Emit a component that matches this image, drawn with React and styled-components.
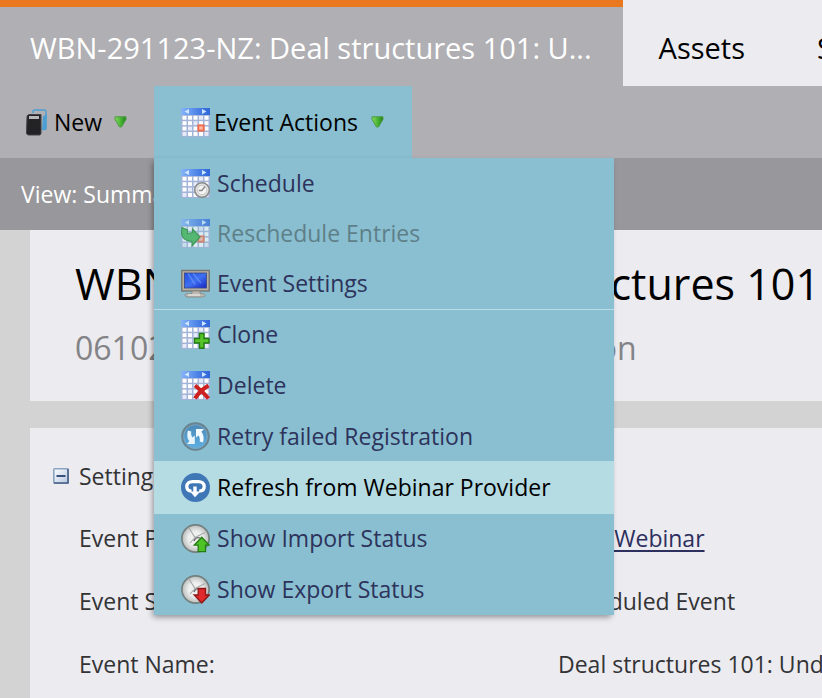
import React from 'react'
import styled, { createGlobalStyle } from 'styled-components'

const GlobalStyle = createGlobalStyle`
    * {
        box-sizing: border-box;
    }
    body {
        margin: 0;
        background: #d3d3d3;
        font-family: "Open Sans", "Noto Sans", sans-serif;
        font-size: 23px;
        line-height: 32px;
        color: #333336;
    }
    button {
        font: inherit;
        border: none;
        cursor: pointer;
    }
`

const Page = styled.div`
    min-height: 100vh;
    display: flex;
    flex-direction: column;
    overflow: hidden;
`
const TabBar = styled.nav`
    display: flex;
    background: #ebebf0;
`
const Tab = styled.a`
    flex: none;
    height: 86px;
    padding: ${props => props.$active ? "0 31px 0 30px" : "0 36px"};
    border-top: 7px solid ${props => props.$active ? "#e9781e" : "#ebebf0"};
    background: ${props => props.$active ? "#b0afb3" : "#ebebf0"};
    color: ${props => props.$active ? "#fff" : "#000"};
    font-size: 29px;
    line-height: 82px;
    white-space: nowrap;
    text-decoration: none;
`
const Toolbar = styled.div`
    display: flex;
    height: 72px;
    background: #b0afb3;
`
const ToolButton = styled.button`
    display: flex;
    align-items: center;
    height: 72px;
    padding: ${props => props.$open ? "0 28px 0 27px" : "0 27px 0 26px"};
    background: ${props => props.$open ? "#89bfd1" : "transparent"};
    color: #000;
    white-space: nowrap;
    svg:last-child {
        margin-left: ${props => props.$open ? "13px" : "12px"};
    }
`
const ToolLabel = styled.span`
    margin-left: ${props => props.$gap || "4px"};
`
const MenuAnchor = styled.div`
    position: relative;
`
const Menu = styled.div`
    position: absolute;
    z-index: 2;
    top: 100%;
    left: 0;
    width: 460px;
    background: #89bfd1;
    box-shadow: -2px 3px 6px -1px rgba(0, 0, 0, 0.4);
`
const MenuGroup = styled.ul`
    display: flex;
    flex-direction: column;
    gap: ${props => props.$gap || "0"};
    margin: 0;
    padding: ${props => props.$pad || "0"};
    list-style: none;
    & + & {
        border-top: 1px solid #b9dde6;
    }
`
const MenuItem = styled.button`
    display: flex;
    align-items: center;
    gap: 7px;
    width: 100%;
    height: 50px;
    padding: 0 27px 2px;
    background: ${props => props.$hover ? "#b5dbe3" : "transparent"};
    box-shadow: ${props => props.$hover ? "0 -2px 0 #b5dbe3, 0 1px 0 #b5dbe3" : "none"};
    color: ${props => props.$hover ? "#000" : "#2d335b"};
    text-align: left;
    white-space: nowrap;
    &:disabled {
        color: #5f7f88;
        cursor: default;
    }
    &:disabled svg {
        opacity: 0.7;
    }
`
const ViewBar = styled.div`
    height: 72px;
    padding-left: 21px;
    background: #98979b;
    color: #fff;
    line-height: 73px;
`
const Content = styled.main`
    flex: 1;
    display: flex;
    flex-direction: column;
    gap: 27px;
    padding-left: 30px;
`
const Panel = styled.section`
    flex: ${props => props.$grow ? "1" : "none"};
    background: #ebebf0;
    white-space: nowrap;
`
const TitlePanel = styled(Panel)`
    height: 171px;
    padding: 24px 0 0 45px;
`
const Title = styled.h1`
    margin: 0;
    color: #000;
    font-size: 43px;
    font-weight: 400;
    line-height: 60px;
`
const SubTitle = styled.p`
    margin: 10px 0 0;
    color: #838386;
    font-size: 32px;
    line-height: 48px;
`
const SettingsHead = styled.div`
    display: flex;
    align-items: center;
    gap: 10px;
    padding: 32px 0 0 23px;
`
const Toggle = styled.button`
    display: flex;
    padding: 0;
    background: transparent;
`
const SettingsTitle = styled.h2`
    margin: 0;
    font-size: 23px;
    font-weight: 400;
`
const Fields = styled.dl`
    display: grid;
    grid-template-columns: 479px 1fr;
    row-gap: 31px;
    margin: 30px 0 0;
    padding-left: 49px;
    dd {
        margin: 0;
    }
`
const Link = styled.a`
    color: #2d2f5e;
    text-decoration-thickness: 2px;
    text-underline-offset: 3px;
`

const cells = [0, 1, 2, 3, 4]

const Svg = ({ children }) => (
    <svg width="29" height="29" viewBox="0 0 29 29" aria-hidden="true">{children}</svg>
)

const Calendar = ({ children }) => (
    <Svg>
        <rect width="29" height="29" fill="#a3b4d8" />
        <rect width="29" height="7" fill="url(#calHead)" />
        <path d="M8 1v5L3.5 3.500zM21 1v5l4.500-2.500z" fill="#cfe6ff" />
        {[0, 1, 2, 3].map(row => cells.map(col => (
            <rect key={row + '-' + col} x={1.5 + col * 5.5} y={7.8 + row * 5.4} width="4" height="3.900" fill={(row + col) % 4 === 3 ? "#e6eaf9" : "#fff"} />
        )))}
        {children}
    </Svg>
)

const EventIcon = () => (
    <Calendar>
        <rect x="17.300" y="17.300" width="5.400" height="5.400" fill="#ffb59e" stroke="#ee6a48" strokeWidth="1.800" />
    </Calendar>
)
const ScheduleIcon = () => (
    <Calendar>
        <circle cx="21" cy="21" r="7.300" fill="#e6e6e4" stroke="#8b8c8d" strokeWidth="1.600" />
        <circle cx="21" cy="21" r="4.800" fill="#f4f4f2" stroke="#c3c4c4" />
        <path d="M24 17.500l-3.200 4h-3" fill="none" stroke="#85878a" strokeWidth="1.300" />
    </Calendar>
)
const RescheduleIcon = () => (
    <Calendar>
        <rect x="17.300" y="17.300" width="5.400" height="5.400" fill="#ffb59e" stroke="#ee6a48" strokeWidth="1.800" />
        <path d="M1 8.500l5.500 2.500v3.500l5-1V10l7.500 8-8 9v-4.500C5 22 .5 19 .5 14z" fill="#3fb64a" stroke="#23852c" strokeWidth="1.200" />
    </Calendar>
)
const CloneIcon = () => (
    <Calendar>
        <path d="M18.500 13.500h4.500v5h5v4.500h-5v5.200h-4.500V23h-5v-4.500h5z" fill="#57c529" stroke="#217a12" strokeWidth="1.400" />
    </Calendar>
)
const DeleteIcon = () => (
    <Calendar>
        <path d="M14 14.500c4 3 9.500 8 13.500 13M27.500 14.500c-5 3-10.500 8-13.500 13" fill="none" stroke="#cf2020" strokeWidth="4" />
    </Calendar>
)
const MonitorIcon = () => (
    <Svg>
        <rect x=".8" y="1.500" width="27.400" height="20.500" fill="#b5b1a7" stroke="#77756f" strokeWidth="1.400" />
        <rect x="3.500" y="4" width="22" height="15" fill="url(#screen)" stroke="#3a4680" strokeWidth=".8" />
        <path d="M7 4.500l7 11M12 4.500l8 9.500" stroke="#7fa6ff" strokeWidth="1.500" opacity=".5" />
        <path d="M11 22h8v2.500c4 0 5 1 5 2.300s-3 1.200-5 1.200H8c-3 0-4-.5-4-1.800S7 24.500 11 24.500z" fill="#bcbab2" stroke="#85837c" strokeWidth=".8" />
        <path d="M7 26h12" stroke="#ecebe6" strokeWidth="1.200" />
    </Svg>
)
const RetryIcon = () => (
    <Svg>
        <circle cx="14.500" cy="14.500" r="13.300" fill="url(#retry)" stroke="#69838f" strokeWidth="2" />
        <circle cx="14.500" cy="14.500" r="11.800" fill="none" stroke="#7fa5bb" />
        <path d="M7 8.500l3.300 1c-.5 2.500 0 4.500 1.300 6l2.200-2V22H6l2.400-2.800C6 16.500 5.800 12 7 8.500z" fill="#e8f6fc" />
        <path d="M22 20.500l-3.300-1c.5-2.500 0-4.500-1.300-6l-2.400 2V7h8l-2.600 2.800c2.400 2.700 2.800 7.200 1.600 10.700z" fill="#f4fbff" />
    </Svg>
)
const RefreshIcon = () => (
    <Svg>
        <circle cx="14.500" cy="14.500" r="14.500" fill="#3f77b6" />
        <path d="M10.500 18.200C7 18 5.800 16 5.800 13.600c0-3.300 2.700-5 5.700-5h6c3 0 5.700 1.700 5.700 5 0 2.900-2 4.600-5 4.600" fill="none" stroke="#fff" strokeWidth="3.300" />
        <path d="M12.300 13.500h3.400v5h3.600L14 24.200l-5-5.700h3.300z" fill="#fff" />
    </Svg>
)
const Dial = ({ children }) => (
    <Svg>
        <circle cx="14.500" cy="14.500" r="13.600" fill="url(#dial)" stroke="#74807f" strokeWidth="1.700" />
        <path d="M8 4l6 9.500L24 8.500M14 13.500L9 19" fill="none" stroke="#a5a8a8" strokeWidth="1.100" />
        <path d="M13 17c1-3 4-4 6-3" fill="none" stroke="#666" strokeWidth="1.300" />
        {children}
    </Svg>
)
const ImportIcon = () => (
    <Dial>
        <path d="M20.700 13.200l7.600 8h-3.800v6.500h-7.300v-6.500h-4z" fill="#4fc226" stroke="#247d14" strokeWidth="1.300" />
    </Dial>
)
const ExportIcon = () => (
    <Dial>
        <path d="M20.700 28l7.600-8h-3.800v-6.500h-7.300V20h-4z" fill="#e0292c" stroke="#8e1716" strokeWidth="1.300" />
    </Dial>
)
const NewIcon = () => (
    <svg width="21" height="27" viewBox="0 0 21 27" aria-hidden="true">
        <path d="M7 4V2.500C7 1.500 7.800 1 8.500 1h10c1 0 1.500.6 1.500 1.500V19c0 1-.7 1.500-1.700 1.500h-2" fill="none" stroke="#4b9fd4" strokeWidth="1.400" />
        <path d="M17 7.500L20.500 5v15.500H16z" fill="#4b9fd4" />
        <path d="M1 8c0-1.800 1.200-2.500 3-2.500h11V24c0 1.500-.8 2-2 2H3c-1.500 0-2.500-.7-2.500-2z" fill="#232326" stroke="#434347" />
        <path d="M3 8.500h10" stroke="#b8b8bb" strokeWidth="3" />
    </svg>
)
const Arrow = () => (
    <svg width="13" height="12" viewBox="0 0 13 12" aria-hidden="true">
        <path d="M1 .8h11v2.500L7.500 11h-2L1 3.300z" fill="url(#arrow)" stroke="#4c9a44" />
    </svg>
)
const Minus = () => (
    <svg width="16" height="16" viewBox="0 0 16 16" aria-hidden="true">
        <rect x=".8" y=".8" width="14.400" height="14.400" rx="1" fill="url(#minus)" stroke="#8ba3c2" strokeWidth="1.600" />
        <path d="M15 1v14H1" fill="none" stroke="#4a6186" strokeWidth="1.600" />
        <path d="M3.500 8h9" stroke="#24406c" strokeWidth="1.800" />
    </svg>
)

const GradientDefs = styled.svg`
    position: absolute;
    width: 0;
    height: 0;
`
const Gradients = () => (
    <GradientDefs aria-hidden="true">
        <defs>
            <linearGradient id="calHead"><stop stopColor="#86b4f8" /><stop offset=".6" stopColor="#4a80e6" /><stop offset="1" stopColor="#2f66d8" /></linearGradient>
            <linearGradient id="screen" x2="1" y2="1"><stop stopColor="#1d4fe0" /><stop offset=".5" stopColor="#3f70f0" /><stop offset="1" stopColor="#1626c4" /></linearGradient>
            <linearGradient id="retry" x2="0" y2="1"><stop stopColor="#4a86b4" /><stop offset="1" stopColor="#5fb2e6" /></linearGradient>
            <radialGradient id="dial"><stop offset=".5" stopColor="#efefef" /><stop offset="1" stopColor="#b9bcbb" /></radialGradient>
            <linearGradient id="arrow"><stop stopColor="#86d860" /><stop offset=".6" stopColor="#3fae2c" /><stop offset="1" stopColor="#2a7c22" /></linearGradient>
            <linearGradient id="minus" x2="1" y2="1"><stop stopColor="#fff" /><stop offset="1" stopColor="#b3c6e0" /></linearGradient>
        </defs>
    </GradientDefs>
)

const eventItems = [
    { label: 'Schedule', Icon: ScheduleIcon },
    { label: 'Reschedule Entries', Icon: RescheduleIcon, disabled: true },
    { label: 'Event Settings', Icon: MonitorIcon },
]
const actionItems = [
    { label: 'Clone', Icon: CloneIcon },
    { label: 'Delete', Icon: DeleteIcon },
    { label: 'Retry failed Registration', Icon: RetryIcon },
    { label: 'Refresh from Webinar Provider', Icon: RefreshIcon, hover: true },
    { label: 'Show Import Status', Icon: ImportIcon },
    { label: 'Show Export Status', Icon: ExportIcon },
]

const MenuItems = ({ items, ...rest }) => (
    <MenuGroup {...rest}>
        {items.map(({ label, Icon, hover, disabled }) => (
            <li key={label}>
                <MenuItem type="button" $hover={hover} disabled={disabled}><Icon />{label}</MenuItem>
            </li>
        ))}
    </MenuGroup>
)

const App = () => {
  return (
    <Page>
        <GlobalStyle />
        <Gradients />
        <TabBar>
            <Tab href="#event" $active>WBN-291123-NZ: Deal structures 101: U...</Tab>
            <Tab href="#assets">Assets</Tab>
            <Tab href="#schedule">Schedule</Tab>
        </TabBar>
        <Toolbar>
            <ToolButton type="button"><NewIcon /><ToolLabel $gap="7px">New</ToolLabel><Arrow /></ToolButton>
            <MenuAnchor>
                <ToolButton type="button" $open aria-expanded="true"><EventIcon /><ToolLabel>Event Actions</ToolLabel><Arrow /></ToolButton>
                <Menu>
                    <MenuItems items={eventItems} $pad="1px 0 0" />
                    <MenuItems items={actionItems} $gap="1px" />
                </Menu>
            </MenuAnchor>
        </Toolbar>
        <ViewBar>View: Summary</ViewBar>
        <Content>
            <TitlePanel>
                <Title>WBN-291123-NZ: Deal structures 101: Understanding</Title>
                <SubTitle>06102023 - Deal Webinar Registration</SubTitle>
            </TitlePanel>
            <Panel $grow>
                <SettingsHead>
                    <Toggle type="button" aria-label="Collapse settings"><Minus /></Toggle>
                    <SettingsTitle>Settings</SettingsTitle>
                </SettingsHead>
                <Fields>
                    <dt>Event Partner:</dt>
                    <dd><Link href="#webinar">View Webinar</Link></dd>
                    <dt>Event Status:</dt>
                    <dd>Scheduled Event</dd>
                    <dt>Event Name:</dt>
                    <dd>Deal structures 101: Understanding</dd>
                </Fields>
            </Panel>
        </Content>
    </Page>
  )
}


export default App
